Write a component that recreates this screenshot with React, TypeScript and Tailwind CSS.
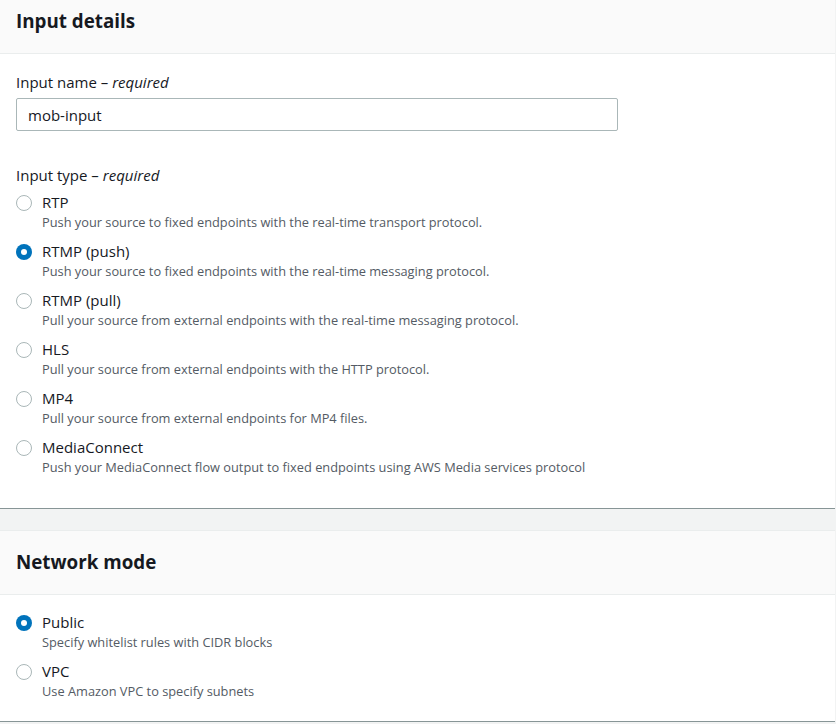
import React, { useState } from "react";

type Option = { value: string; label: string; description: string };

const inputTypes: Option[] = [
  { value: "rtp", label: "RTP", description: "Push your source to fixed endpoints with the real-time transport protocol." },
  { value: "rtmp-push", label: "RTMP (push)", description: "Push your source to fixed endpoints with the real-time messaging protocol." },
  { value: "rtmp-pull", label: "RTMP (pull)", description: "Pull your source from external endpoints with the real-time messaging protocol." },
  { value: "hls", label: "HLS", description: "Pull your source from external endpoints with the HTTP protocol." },
  { value: "mp4", label: "MP4", description: "Pull your source from external endpoints for MP4 files." },
  { value: "mediaconnect", label: "MediaConnect", description: "Push your MediaConnect flow output to fixed endpoints using AWS Media services protocol" },
];

const networkModes: Option[] = [
  { value: "public", label: "Public", description: "Specify whitelist rules with CIDR blocks" },
  { value: "vpc", label: "VPC", description: "Use Amazon VPC to specify subnets" },
];

function RadioGroup({ options, value, onChange }: { options: Option[]; value: string; onChange: (v: string) => void }) {
  return (
    <div className="flex flex-col gap-[9px]">
      {options.map((opt) => {
        const checked = opt.value === value;
        return (
          <label key={opt.value} className="flex cursor-pointer items-start gap-[10px]" onClick={() => onChange(opt.value)}>
            <span
              className={
                checked
                  ? "mt-[3px] flex h-[16px] w-[16px] shrink-0 items-center justify-center rounded-full bg-[#0073bb]"
                  : "mt-[3px] h-[16px] w-[16px] shrink-0 rounded-full border-[1.5px] border-[#aab7b8] bg-white"
              }
            >
              {checked && <span className="h-[6px] w-[6px] rounded-full bg-white" />}
            </span>
            <span className="flex flex-col">
              <span className="text-[15px] leading-[20px] text-[#16191f]">{opt.label}</span>
              <span className="text-[12.8px] leading-[20px] text-[#545b64]">{opt.description}</span>
            </span>
          </label>
        );
      })}
    </div>
  );
}

function Section({ title, children }: { title: string; children: React.ReactNode }) {
  return (
    <section className="border-b border-[#879596] bg-white">
      <div className="border-b border-[#eaeded] bg-[#fafafa] px-[16px] pt-[18px] pb-[19px]">
        <h2 className="text-[18.8px] font-bold leading-[26px] text-[#16191f]">{title}</h2>
      </div>
      {children}
    </section>
  );
}

export default function App() {
  const [name, setName] = useState("mob-input");
  const [inputType, setInputType] = useState("rtmp-push");
  const [network, setNetwork] = useState("public");

  return (
    <div className="min-h-screen overflow-hidden bg-[#f2f3f3] pr-px" style={{ fontFamily: '"Open Sans", "Noto Sans", sans-serif' }}>
      {/* page is scrolled a little, so the first header is cut at the top */}
      <div className="-mt-[10px]">
        <Section title="Input details">
          <div className="px-[16px] pt-[17px] pb-[31px]">
            <div className="text-[15px] leading-[22px] text-[#16191f]">
              Input name – <i>required</i>
            </div>
            <input
              value={name}
              onChange={(e) => setName(e.target.value)}
              className="mt-[5px] h-[33px] w-[602px] rounded-[2px] border border-[#aab7b8] px-[11px] text-[15px] text-[#16191f] outline-none"
            />
            <div className="mt-[33px] text-[15px] leading-[22px] text-[#16191f]">
              Input type – <i>required</i>
            </div>
            <div className="mt-[6px]">
              <RadioGroup options={inputTypes} value={inputType} onChange={setInputType} />
            </div>
          </div>
        </Section>
        <div className="h-[21px]" />
        <div className="border-t border-[#eaeded]">
          <Section title="Network mode">
            <div className="px-[16px] pt-[17px] pb-[20px]">
              <RadioGroup options={networkModes} value={network} onChange={setNetwork} />
            </div>
          </Section>
        </div>
      </div>
    </div>
  );
}
